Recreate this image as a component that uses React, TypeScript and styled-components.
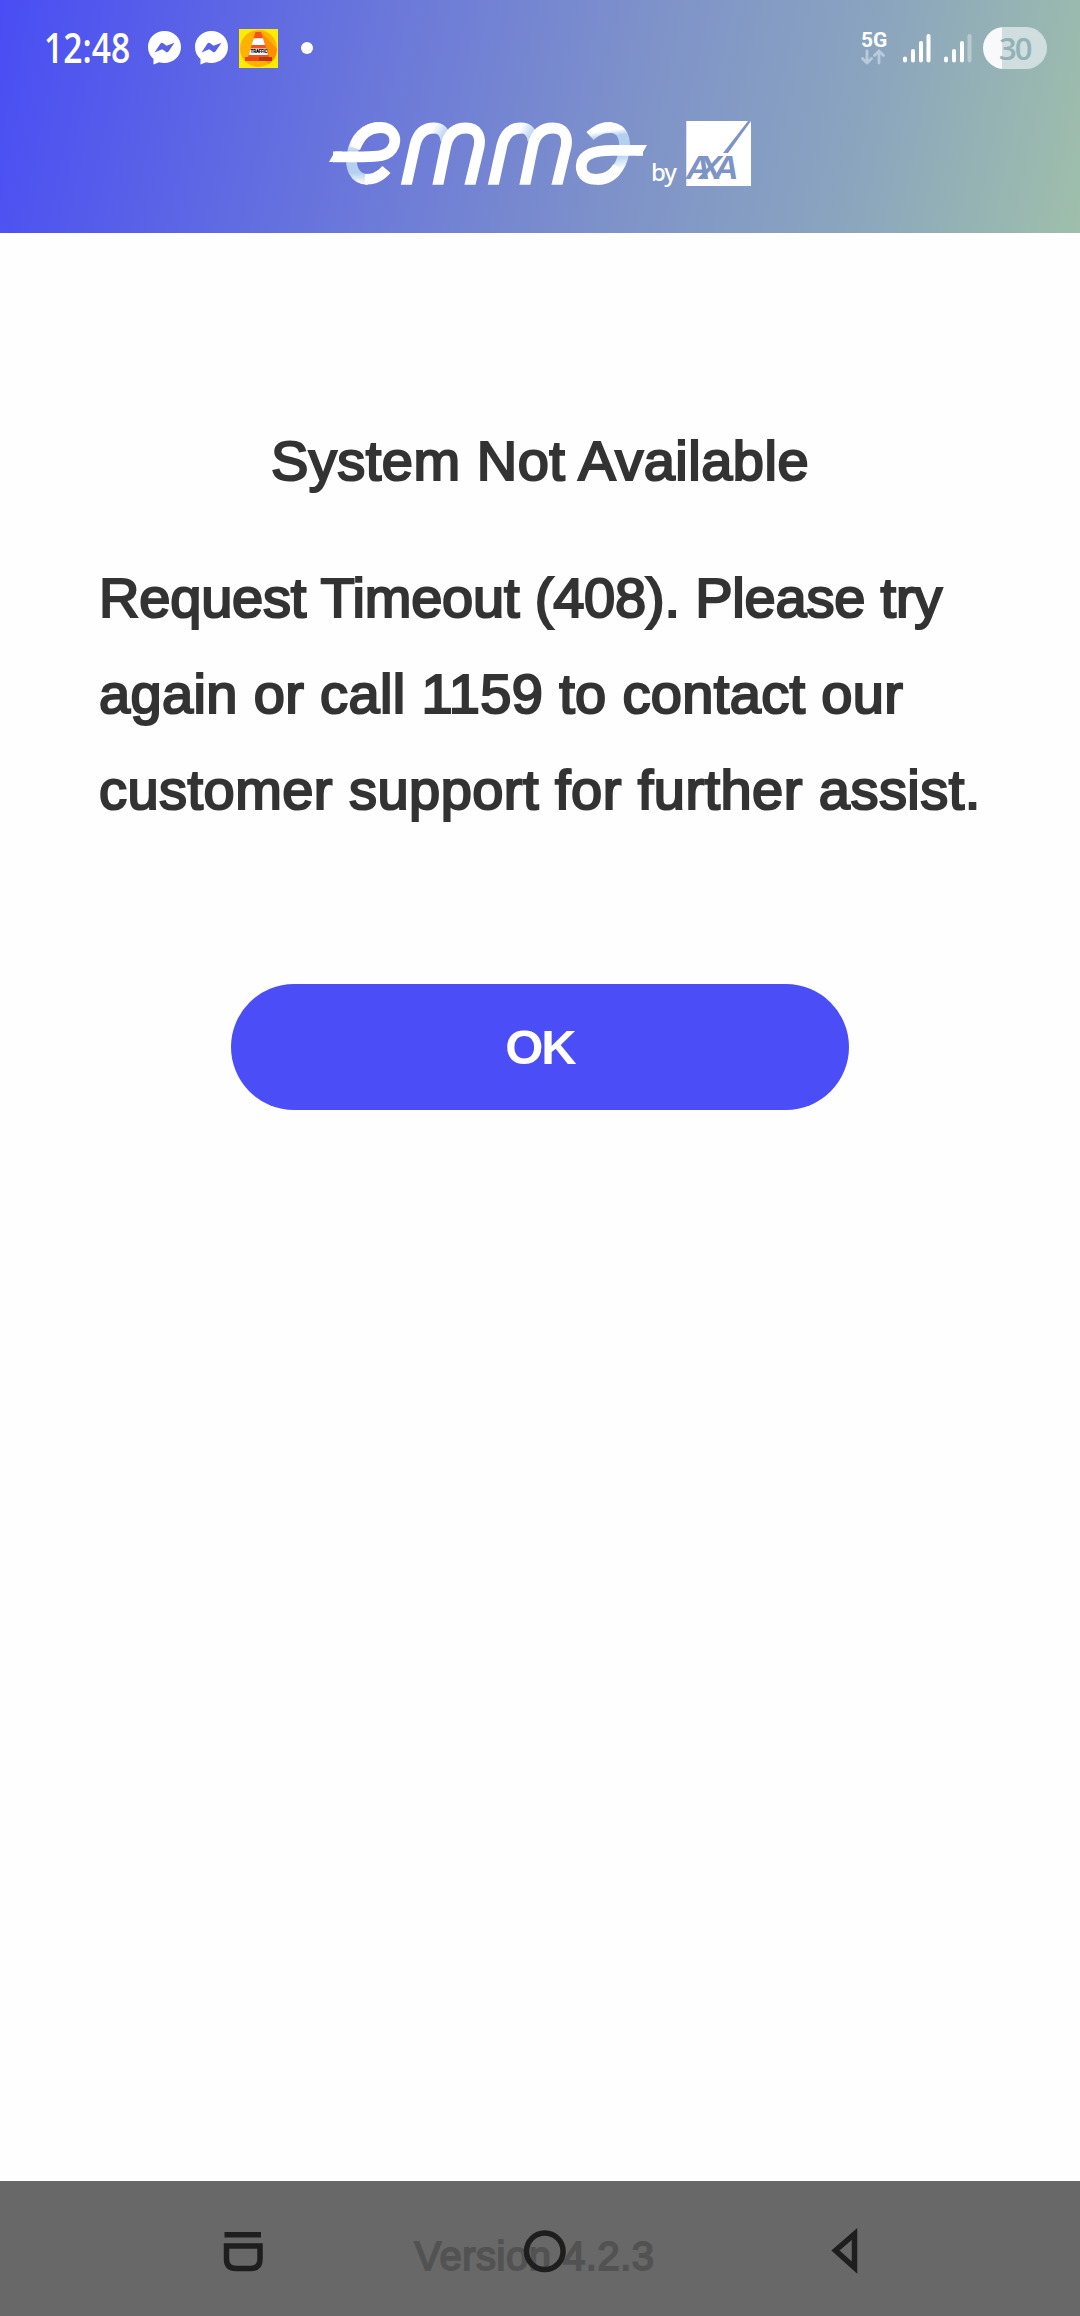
import React from "react";
import styled, { createGlobalStyle } from "styled-components";

const GlobalStyle = createGlobalStyle`
  * { box-sizing: border-box; }
  body { margin: 0; background: #fff; }
`;

const Screen = styled.div`
  width: 1080px;
  height: 2316px;
  display: flex;
  flex-direction: column;
  background: #fefefe;
  font-family: "Liberation Sans", Arial, sans-serif;
  color: #333;
  overflow: hidden;
`;

const Header = styled.header`
  height: 233px;
  flex: none;
  display: flex;
  flex-direction: column;
  background: linear-gradient(102deg, #494df4 0%, #6b78da 35%, #7f93c9 59%, #8aa4bf 78%, #9fbfab 100%);
`;

const StatusBar = styled.div`
  height: 96px;
  padding: 0 33px 0 44px;
  display: flex;
  justify-content: space-between;
`;

const StatusGroup = styled.div`
  display: flex;
  align-items: center;
  height: 96px;
`;

const Clock = styled.span`
  width: 104px;
  font: 600 41px/92px "Open Sans", sans-serif;
  color: #fff;
  transform: scaleX(0.82);
  transform-origin: left center;
  padding-bottom: 3px;
`;

const StatusIcon = styled.svg<{ $gap?: number }>`
  display: block;
  flex: none;
  margin-right: ${(p) => p.$gap ?? 0}px;
`;

const Dot = styled.span`
  width: 12px;
  height: 12px;
  border-radius: 50%;
  background: #fff;
`;

const Network = styled.div`
  width: 42px;
  display: flex;
  flex-direction: column;
  align-items: flex-start;
  font: 700 21px/18px Roboto, sans-serif;
  color: #fff;
`;

const Battery = styled.div`
  width: 64px;
  height: 42px;
  border-radius: 21px;
  padding-left: 16px;
  background: linear-gradient(90deg, #f7f9fb 0 19px, #d0dedf 19px);
  font: 600 31px/42px "Open Sans", sans-serif;
  letter-spacing: -2px;
  color: #93b2b5;
`;

const Brand = styled.div`
  display: flex;
  height: 92px;
  padding: 24px 0 0 326px;
`;

const Page = styled.main`
  flex: 1;
  display: flex;
  flex-direction: column;
  align-items: center;
`;

const Title = styled.h1`
  margin: 180px 0 0;
  font-size: 56px;
  font-weight: 400;
  line-height: 96px;
  -webkit-text-stroke: 2.2px #333;
  letter-spacing: 0.5px;
`;

const Message = styled.p`
  width: 882px;
  margin: 41px 0 0;
  font-size: 56px;
  line-height: 96px;
  -webkit-text-stroke: 2.2px #333;
  white-space: nowrap;
`;

const Line = styled.span<{ $spacing: number }>`
  display: block;
  letter-spacing: ${(p) => p.$spacing}px;
`;

const OkButton = styled.button`
  width: 618px;
  height: 126px;
  margin-top: 146px;
  padding: 0;
  border: 0;
  border-radius: 63px;
  background: #4b4ef6;
  color: #fff;
  font: 700 49px/126px "Liberation Sans", Arial, sans-serif;
  letter-spacing: -2px;
`;

const NavBar = styled.footer`
  position: relative;
  height: 135px;
  flex: none;
  background: #686868;
  text-align: center;
`;

const Version = styled.span`
  display: block;
  padding: 50px 11px 0 0;
  font-size: 40px;
  line-height: 50px;
  letter-spacing: 0.5px;
  color: #525252;
  -webkit-text-stroke: 1.8px #525252;
`;

const NavIcons = styled.svg`
  position: absolute;
  left: 0;
  top: 0;
`;

const Messenger = ({ gap }: { gap: number }) => (
  <StatusIcon $gap={gap} width="33" height="34" viewBox="0 0 33 34">
    <path fill="#fff" d="M16.500 0C7 0 0 7 0 16C0 21 2 25 5.500 28V33.500L11 31.300C22 34.500 33 27 33 16C33 7 26 0 16.500 0Z" />
    <path fill="#5961e7" d="M6.500 21.500L12.500 12.500Q13.700 11.200 15.200 12.200L18.500 14.800L26.500 11.800L20.500 20.500Q19.300 22 17.700 20.800L14.300 18.300Z" />
  </StatusIcon>
);

const TrafficCone = () => (
  <StatusIcon $gap={23} width="39" height="39" viewBox="0 0 39 39">
    <path fill="#ffeb00" d="M0 0H39V39H0Z" />
    <circle cx="19.500" cy="19.500" r="18.500" fill="#ffb300" />
    <path fill="#ff8f00" d="M22 3L38 20A18.500 18.500 0 0 1 30 35L22 28Z" />
    <path fill="#f4511e" d="M16.500 3H22L30 28H9Z" />
    <path fill="#fff" d="M14.800 9.300H24L26 16H12.600ZM11.500 19.500H27.300L29 26H9.800Z" />
    <path fill="#e64a19" d="M6 28H33V32H6Z" />
    <path fill="#bf360c" d="M20 28H33V32H20Z" />
    <text x="11.500" y="24.300" fontSize="4.600" fontWeight="900" fontFamily="Roboto, sans-serif" textLength="17">TRAFFIC</text>
  </StatusIcon>
);

const Signal = ({ weak, gap }: { weak?: boolean; gap: number }) => (
  <StatusIcon $gap={gap} width="28" height="30" viewBox="0 0 28 30" stroke="#fff" strokeWidth="4" strokeLinecap="round">
    <path d="M2 25.500V27.500M10 18V27.500M18 10V27.500" />
    <path d="M25.500 3V27.500" opacity={weak ? 0.35 : 1} />
  </StatusIcon>
);

const Logo = () => (
  <svg width="430" height="70" viewBox="326 120 430 70">
    <defs>
      <linearGradient id="eFold" gradientUnits="userSpaceOnUse" x1="360" y1="184" x2="360" y2="140">
        <stop offset="0" stopColor="#fff" />
        <stop offset=".25" stopColor="#b5d0ef" />
        <stop offset=".75" stopColor="#b5d0ef" />
        <stop offset="1" stopColor="#fff" />
      </linearGradient>
      <linearGradient id="aFold" gradientUnits="userSpaceOnUse" x1="612" y1="130" x2="618" y2="170">
        <stop offset="0" stopColor="#fff" />
        <stop offset=".15" stopColor="#b5d0ef" />
        <stop offset=".65" stopColor="#b5d0ef" />
        <stop offset="1" stopColor="#fff" />
      </linearGradient>
      <linearGradient id="mFold" gradientUnits="userSpaceOnUse" x1="434" y1="126" x2="447" y2="134">
        <stop offset="0" stopColor="#fff" />
        <stop offset="1" stopColor="#b5d0ef" />
      </linearGradient>
      <linearGradient id="mFold2" gradientUnits="userSpaceOnUse" x1="521" y1="126" x2="534" y2="134">
        <stop offset="0" stopColor="#fff" />
        <stop offset="1" stopColor="#b5d0ef" />
      </linearGradient>
      <clipPath id="baseline">
        <rect x="326" y="120" width="330" height="64.700" />
      </clipPath>
    </defs>
    <g fill="none" strokeWidth="10.800" clipPath="url(#baseline)">
      <path stroke="url(#eFold)" d="M368 179.500C354 179 350 167 352 155C355 138 365 127.500 380 127.500" />
      <path stroke="#fff" d="M355 148C360 136 367 127.500 381 127.500C391 127.500 397 136 394 145C389 159 373 156.800 350 156.800H333" />
      <path stroke="#fff" d="M386.500 169.500C378 179 371 179.500 365 179.400" />
      <path stroke="#fff" d="M405.200 190L415 145C418 133 425 128 434 128" />
      <path stroke="url(#mFold)" d="M433.500 128C441 128 445 132 446 141" />
      <path stroke="#fff" d="M436.800 190L446 145C449 133 456 128 466 128C477 128 481 136 479 147L468.700 190" />
      <path stroke="#fff" d="M492.200 190L502 145C505 133 512 128 521 128" />
      <path stroke="url(#mFold2)" d="M520.500 128C528 128 532 132 533 141" />
      <path stroke="#fff" d="M523.800 190L533 145C536 133 543 128 553 128C564 128 568 136 566 147L555.700 190" />
      <path stroke="url(#aFold)" d="M590 136C600 127 606 127.500 611 127.500C623 129 626 139 624 152C621 169 611 179.500 597 179.500" />
      <path stroke="#fff" d="M643 150.300H612C596 150.300 585 153 582 162C579 173 586 179.500 596 179.500C607 179.500 614 174 618 167" />
    </g>
    <path fill="#fff" d="M329 162L335 151.500H342V162ZM636 145H647L641 155.500H636Z" />
    <text x="651" y="181" fill="#fff" fontSize="24" fontWeight="500" fontFamily="Noto Sans, sans-serif" textLength="26">by</text>
    <path fill="#fff" d="M686.300 121H751V186H686.300Z" />
    <path fill="#7e94c5" d="M748 121H751L728 153H723Z" />
    <text x="686 699 714" y="179" fill="#7e94c5" fontSize="34" fontWeight="700" fontStyle="italic" fontFamily="Liberation Sans, Arial, sans-serif">AXA</text>
  </svg>
);

export default function App() {
  return (
    <Screen>
      <GlobalStyle />
      <Header>
        <StatusBar>
          <StatusGroup>
            <Clock>12:48</Clock>
            <Messenger gap={14} />
            <Messenger gap={11} />
            <TrafficCone />
            <Dot />
          </StatusGroup>
          <StatusGroup>
            <Network>
              5G
              <StatusIcon width="24" height="16" viewBox="0 0 24 16" fill="none" stroke="#b8cadb" strokeWidth="2.800" strokeLinecap="round">
                <path d="M6 2V14M1.500 9.500L6 14L10.500 9.500M18 14V2M13.500 6.500L18 2L22.500 6.500" />
              </StatusIcon>
            </Network>
            <Signal gap={13} />
            <Signal weak gap={11} />
            <Battery>30</Battery>
          </StatusGroup>
        </StatusBar>
        <Brand>
          <Logo />
        </Brand>
      </Header>
      <Page>
        <Title>System Not Available</Title>
        <Message>
          <Line $spacing={-0.2}>Request Timeout (408). Please try</Line>
          <Line $spacing={0.35}>again or call 1159 to contact our</Line>
          <Line $spacing={0.46}>customer support for further assist.</Line>
        </Message>
        <OkButton>OK</OkButton>
      </Page>
      <NavBar>
        <Version>Version 4.2.3</Version>
        <NavIcons width="1080" height="135" viewBox="0 2181 1080 135" fill="none" stroke="#1e1e1e" strokeWidth="5.500">
          <path d="M224.500 2234.700H261M226.500 2246H260V2259Q260 2268.500 250.500 2268.500H236Q226.500 2268.500 226.500 2259Z" />
          <circle cx="544.800" cy="2251.300" r="18.300" />
          <path d="M854.500 2234V2267.500L835.500 2250.500Z" />
        </NavIcons>
      </NavBar>
    </Screen>
  );
}
